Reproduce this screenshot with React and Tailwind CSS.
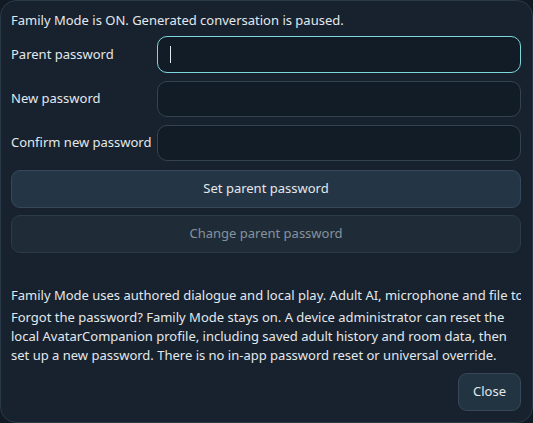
export default function App() {
  return (
    <div className="h-[423px] w-[533px] bg-[#111a23] font-['Noto_Sans',sans-serif] text-[13px] text-[#e3e8ec]">
      <div className="flex h-full flex-col overflow-hidden rounded-[16px] border border-[#2a3947] bg-[#17222e] pl-[10px] pr-[11px] pt-[8px] pb-[11px]">
        <p className="leading-[22px]">Family Mode is ON. Generated conversation is paused.</p>
        <div className="mt-[5px] grid grid-cols-[auto_1fr] items-center gap-x-[6px] gap-y-[8px]">
          <label>Parent password</label>
          <div className="flex h-[37px] items-center rounded-[10px] border-[1.5px] border-[#7fd6dc] bg-[#121c27] px-[12px]">
            <span className="h-[17px] w-px bg-[#e3e8ec]" />
          </div>
          <label>New password</label>
          <div className="h-[36px] rounded-[10px] border border-[#34444f] bg-[#121c27]" />
          <label>Confirm new password</label>
          <div className="h-[36px] rounded-[10px] border border-[#34444f] bg-[#121c27]" />
        </div>
        <button className="mt-[9px] h-[38px] w-full rounded-[9px] border border-[#36495a] bg-[#243645] text-[#e3e8ec]">
          Set parent password
        </button>
        <button disabled className="mt-[7px] h-[38px] w-full rounded-[9px] border border-[#2c3b48] bg-[#1f2c38] text-[#86929c]">
          Change parent password
        </button>
        <p className="mt-[31px] overflow-hidden whitespace-nowrap leading-[22px]">
          Family Mode uses authored dialogue and local play. Adult AI, microphone and file tools are off.
        </p>
        <p className="mt-[2px] leading-[19px]">
          Forgot the password? Family Mode stays on. A device administrator can reset the local AvatarCompanion profile, including saved adult history and room data, then set up a new password. There is no in-app password reset or universal override.
        </p>
        <div className="mt-auto flex justify-end">
          <button className="h-[38px] rounded-[9px] border border-[#36495a] bg-[#223442] px-[14px] text-[#e3e8ec]">
            Close
          </button>
        </div>
      </div>
    </div>
  );
}
